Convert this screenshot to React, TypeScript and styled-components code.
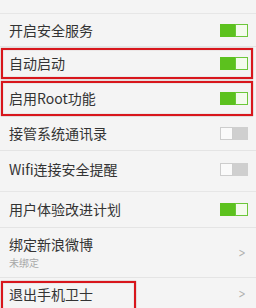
import React from "react";
import styled, { createGlobalStyle } from "styled-components";

const Global = createGlobalStyle`
  html, body { margin: 0; padding: 0; background: #f4f4f4; }
  body { font-family: "Noto Sans CJK SC", "Noto Sans", sans-serif; }
`;

const Screen = styled.div`
  width: 256px;
  height: 308px;
  overflow: hidden;
  background: #f4f4f4;
  display: flex;
  flex-direction: column;
`;

const Row = styled.div<{ h: number; line?: boolean; mark?: "full" | "left" }>`
  position: relative;
  flex: 0 0 ${(p) => p.h}px;
  display: flex;
  align-items: center;
  justify-content: space-between;
  padding: 0 8px 0 9px;
  box-sizing: border-box;
  border-bottom: ${(p) => (p.line ? "1px solid #e4e4e4" : "none")};
  &::after {
    content: "";
    display: ${(p) => (p.mark ? "block" : "none")};
    position: absolute;
    left: 1px;
    top: ${(p) => (p.mark === "left" ? "3px" : "1px")};
    width: ${(p) => (p.mark === "left" ? "135px" : "252px")};
    height: ${(p) => (p.mark === "left" ? "40px" : `${p.h - 2}px`)};
    border: 2px solid #d8161c;
    box-sizing: border-box;
    box-shadow: 0 0 1px rgba(90, 0, 0, 0.6), inset 0 0 1px rgba(90, 0, 0, 0.5);
  }
`;

const Spacer = styled.div<{ h: number }>`
  flex: 0 0 ${(p) => p.h}px;
  border-bottom: 1px solid #e6e6e6;
`;

const Labels = styled.div`
  display: flex;
  flex-direction: column;
`;

const Title = styled.span`
  font-size: 14px;
  line-height: 17px;
  color: #333;
`;

const Sub = styled.span`
  font-size: 10px;
  line-height: 13px;
  color: #a8a8a8;
  margin-top: 3px;
`;

const Toggle = styled.div<{ on: boolean }>`
  width: 28px;
  height: 13px;
  display: flex;
  flex-direction: ${(p) => (p.on ? "row" : "row-reverse")};
  background: ${(p) => (p.on ? "#5cc11e" : "#cfcfcf")};
`;

const Fill = styled.div`
  flex: 1;
`;

const Knob = styled.div<{ on: boolean }>`
  width: 13px;
  height: 13px;
  box-sizing: border-box;
  background: ${(p) => (p.on ? "#f4fbee" : "#fafafa")};
  border: 1px solid ${(p) => (p.on ? "#6cc73a" : "#cdcdcd")};
`;

const Arrow = styled.span`
  font-family: "DejaVu Sans", sans-serif;
  font-size: 12px;
  color: #b0b0b0;
  margin-right: 1px;
  transform: scaleX(0.7);
`;

const Switch = ({ on }: { on: boolean }) => (
  <Toggle on={on}>
    <Fill />
    <Knob on={on} />
  </Toggle>
);

export default function App() {
  return (
    <Screen>
      <Global />
      <Spacer h={13} />
      <Row h={33} line>
        <Title>开启安全服务</Title>
        <Switch on />
      </Row>
      <Row h={33} mark="full">
        <Title>自动启动</Title>
        <Switch on />
      </Row>
      <Row h={37} mark="full">
        <Title>启用Root功能</Title>
        <Switch on />
      </Row>
      <Row h={34} line>
        <Title>接管系统通讯录</Title>
        <Switch on={false} />
      </Row>
      <Row h={36}>
        <Title>Wifi连接安全提醒</Title>
        <Switch on={false} />
      </Row>
      <Spacer h={4} />
      <Row h={36} line>
        <Title>用户体验改进计划</Title>
        <Switch on />
      </Row>
      <Row h={50} line>
        <Labels>
          <Title>绑定新浪微博</Title>
          <Sub>未绑定</Sub>
        </Labels>
        <Arrow>&gt;</Arrow>
      </Row>
      <Row h={32} mark="left">
        <Title>退出手机卫士</Title>
        <Arrow>&gt;</Arrow>
      </Row>
    </Screen>
  );
}
